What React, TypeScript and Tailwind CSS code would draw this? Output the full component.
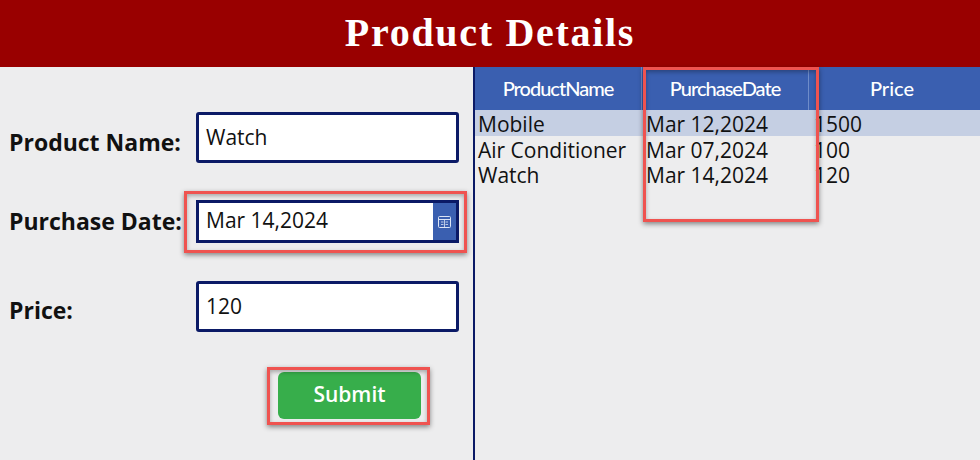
import React from 'react';

const rows = [
  { name: 'Mobile', date: 'Mar 12,2024', price: '1500' },
  { name: 'Air Conditioner', date: 'Mar 07,2024', price: '100' },
  { name: 'Watch', date: 'Mar 14,2024', price: '120' },
];

const Highlight: React.FC<{ className: string }> = ({ className }) => (
  <div
    className={`absolute border-[3px] border-[#ef5350] shadow-[0_2px_5px_rgba(0,0,0,0.45),inset_0_2px_4px_rgba(0,0,0,0.3)] ${className}`}
  />
);

const CalendarIcon = () => (
  <svg width="13" height="12" viewBox="0 0 13 12" fill="none" stroke="#dbe4f5" strokeWidth="1">
    <rect x="0.5" y="0.5" width="12" height="11" rx="1" />
    <path d="M0.5 3.5h12" />
    <path d="M3 6h2.5M7.5 6h2.5M3 8.5h2.5M7.5 8.5h2.5M6.5 4v7" strokeWidth="0.8" />
  </svg>
);

export default function App() {
  return (
    <div className="relative w-[980px] h-[460px] overflow-hidden bg-[#ededee] font-['Open_Sans',sans-serif] text-[#111]">
      <header className="h-[67px] bg-[#990000] flex items-center justify-center">
        <h1 className="font-['Liberation_Serif',serif] font-bold text-[40px] text-white tracking-[1.7px] pb-[2px]">
          Product Details
        </h1>
      </header>

      <div className="flex h-[393px]">
        {/* Form */}
        <div className="w-[475px] pl-[9px] border-r-2 border-[#0b1a66]">
          <div className="flex items-start mt-[45px]">
            <label className="w-[187px] pt-[14px] text-[23px] leading-[33px] font-bold">Product Name:</label>
            <div className="w-[263px] h-[51px] bg-white border-[3px] border-[#0b1a66] rounded-[3px] flex items-center pl-[7px] text-[21px]">
              Watch
            </div>
          </div>

          <div className="flex items-center mt-[37px]">
            <label className="w-[187px] text-[23px] leading-[33px] font-bold">Purchase Date:</label>
            <div className="w-[263px] h-[43px] bg-white border-[3px] border-[#0b1a66] flex items-center justify-between text-[21px]">
              <span className="pl-[7px] pb-[2px]">Mar 14,2024</span>
              <span className="w-[23px] h-full bg-[#3a5fb0] flex items-center justify-center">
                <CalendarIcon />
              </span>
            </div>
          </div>

          <div className="flex items-start mt-[38px]">
            <label className="w-[187px] pt-[13px] text-[23px] leading-[33px] font-bold">Price:</label>
            <div className="w-[263px] h-[51px] bg-white border-[3px] border-[#0b1a66] rounded-[3px] flex items-center pl-[7px] pt-[1px] text-[21px]">
              120
            </div>
          </div>

          <button className="block ml-[269px] mt-[40px] w-[143px] h-[47px] rounded-[6px] bg-[#37ae4b] text-white text-[21px] font-semibold pb-[2px]">
            Submit
          </button>
        </div>

        {/* Gallery table */}
        <div className="flex-1">
          <div className="grid grid-cols-[167px_167px_1fr] h-[43px] bg-[#3a5fb0] text-white font-['Lato',sans-serif] text-[20px] tracking-[-1px] font-medium">
            <div className="flex items-center justify-center pb-[2px] border-r border-[#6f8cc9]">ProductName</div>
            <div className="flex items-center justify-center pb-[2px] border-r border-[#6f8cc9]">PurchaseDate</div>
            <div className="flex items-center justify-center pb-[2px] pr-[5px] tracking-[0px]">Price</div>
          </div>
          {rows.map((row, i) => (
            <div
              key={row.name}
              className={`grid grid-cols-[167px_167px_1fr] text-[21px] h-[25.5px] leading-[28px] ${i === 0 ? 'bg-[#c5cfe3]' : ''}`}
            >
              <div className="pl-[3px] whitespace-nowrap">{row.name}</div>
              <div className="pl-[4px] whitespace-nowrap">{row.date}</div>
              <div className="pl-[5px]">{row.price}</div>
            </div>
          ))}
        </div>
      </div>

      <Highlight className="left-[184px] top-[191px] w-[283px] h-[62px]" />
      <Highlight className="left-[267px] top-[367px] w-[163px] h-[58px]" />
      <Highlight className="left-[643px] top-[67px] w-[176px] h-[155px]" />
    </div>
  );
}
